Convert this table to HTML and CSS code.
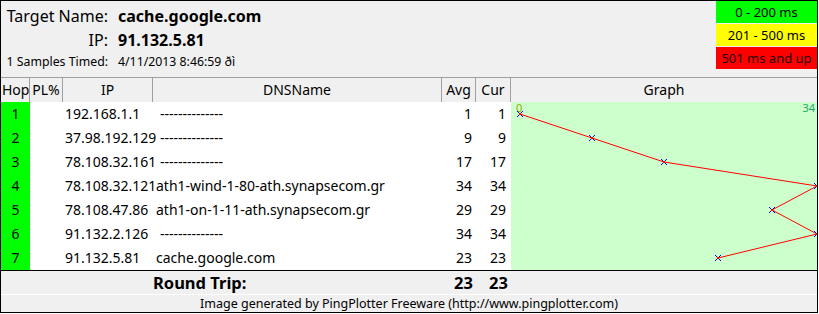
FILE: index.html
```html
<!DOCTYPE html>
<html>
<head>
<meta charset="utf-8">
<link rel="stylesheet" href="styles.css">
</head>
<body>
<div class="frame">
  <div class="top">
    <div class="info">
      <div class="lbl big">Target Name:</div><div class="val big b">cache.google.com</div>
      <div class="lbl big">IP:</div><div class="val big b">91.132.5.81</div>
      <div class="lbl small">1 Samples Timed:</div><div class="val small">4/11/2013 8:46:59 ðì</div>
    </div>
    <div class="legend">
      <div class="lg green">0 - 200 ms</div>
      <div class="lg yellow">201 - 500 ms</div>
      <div class="lg red">501 ms and up</div>
    </div>
  </div>
  <div class="hdr">
    <div class="h hop">Hop</div>
    <div class="h">PL%</div>
    <div class="h">IP</div>
    <div class="h">DNSName</div>
    <div class="h">Avg</div>
    <div class="h">Cur</div>
    <div class="h last">Graph</div>
  </div>
  <div class="body">
    <div class="c hopc">1</div><div class="c"></div><div class="c ip">192.168.1.1</div><div class="c dns dash">--------------</div><div class="c num">1</div><div class="c num cur">1</div>
    <div class="c hopc">2</div><div class="c"></div><div class="c ip">37.98.192.129</div><div class="c dns dash">--------------</div><div class="c num">9</div><div class="c num cur">9</div>
    <div class="c hopc">3</div><div class="c"></div><div class="c ip">78.108.32.161</div><div class="c dns dash">--------------</div><div class="c num">17</div><div class="c num cur">17</div>
    <div class="c hopc">4</div><div class="c"></div><div class="c ip">78.108.32.121</div><div class="c dns">ath1-wind-1-80-ath.synapsecom.gr</div><div class="c num">34</div><div class="c num cur">34</div>
    <div class="c hopc">5</div><div class="c"></div><div class="c ip">78.108.47.86</div><div class="c dns">ath1-on-1-11-ath.synapsecom.gr</div><div class="c num">29</div><div class="c num cur">29</div>
    <div class="c hopc">6</div><div class="c"></div><div class="c ip">91.132.2.126</div><div class="c dns dash">--------------</div><div class="c num">34</div><div class="c num cur">34</div>
    <div class="c hopc">7</div><div class="c"></div><div class="c ip">91.132.5.81</div><div class="c dns">cache.google.com</div><div class="c num">23</div><div class="c num cur">23</div>
    <div class="graph">
      <svg width="306" height="168" viewBox="0 0 306 168">
        <text x="5" y="10" class="g0">0</text>
        <text x="304" y="10" class="g34" text-anchor="end">34</text>
        <polyline points="9,12 81,36 153,60 306,84 261,108 306,132 207,156" fill="none" stroke="#ff0000" stroke-width="1"/>
        <g stroke="#0000ff" stroke-width="1" fill="none">
          <path d="M6 9l6 6M12 9l-6 6"/>
          <path d="M78 33l6 6M84 33l-6 6"/>
          <path d="M150 57l6 6M156 57l-6 6"/>
          <path d="M303 81l6 6M309 81l-6 6"/>
          <path d="M258 105l6 6M264 105l-6 6"/>
          <path d="M303 129l6 6M309 129l-6 6"/>
          <path d="M204 153l6 6M210 153l-6 6"/>
        </g>
        <g fill="#ff0000">
          <rect x="8" y="11" width="2" height="2"/>
          <rect x="80" y="35" width="2" height="2"/>
          <rect x="152" y="59" width="2" height="2"/>
          <rect x="305" y="83" width="2" height="2"/>
          <rect x="260" y="107" width="2" height="2"/>
          <rect x="305" y="131" width="2" height="2"/>
          <rect x="206" y="155" width="2" height="2"/>
        </g>
      </svg>
    </div>
  </div>
  <div class="rt">
    <div class="rtl">Round Trip:</div>
    <div class="rtn">23</div>
    <div class="rtn">23</div>
    <div></div>
  </div>
  <div class="foot">Image generated by PingPlotter Freeware (http://www.pingplotter.com)</div>
</div>
</body>
</html>
```
FILE: styles.css
```css
html, body { margin: 0; padding: 0; background: #ffffff; }
body { font-family: "Noto Sans", "Open Sans", sans-serif; color: #000; }
.frame {
  box-sizing: border-box;
  width: 818px;
  height: 313px;
  border: 1px solid #000;
  background: #f0f0f0;
  display: flex;
  flex-direction: column;
}
.top {
  height: 76px;
  display: flex;
  justify-content: space-between;
  align-items: flex-start;
}
.info {
  display: grid;
  grid-template-columns: 107px auto;
  grid-template-rows: 26px 22px 20px;
  column-gap: 10px;
  padding-top: 2px;
  align-items: center;
}
.lbl { text-align: right; white-space: nowrap; }
.val { white-space: nowrap; }
.big { font-size: 16px; }
.small { font-size: 12.3px; }
.b { font-weight: bold; }
.legend { display: flex; flex-direction: column; gap: 1px; width: 101px; }
.lg { height: 22px; line-height: 22px; text-align: center; font-size: 13px; }
.green { background: #00ff00; }
.yellow { background: #ffff00; }
.red { background: #ff0000; color: #1a0000; }
.hdr {
  display: grid;
  grid-template-columns: 29px 33px 90px 289px 34px 35px 306px;
  height: 24px;
  border-top: 1px solid #a0a0a0;
  font-size: 14px;
}
.h {
  border-right: 1px solid #a0a0a0;
  text-align: center;
  line-height: 24px;
  white-space: nowrap;
  overflow: hidden;
}
.h.hop { text-align: left; padding-left: 1px; }
.h.last { border-right: none; }
.body {
  display: grid;
  grid-template-columns: 29px 33px 90px 289px 34px 35px 306px;
  grid-template-rows: repeat(7, 24px);
  background: #ffffff;
  font-size: 14px;
  border-bottom: 1px solid #000;
}
.c { line-height: 24px; white-space: nowrap; }
.hopc { background: #00ff00; text-align: center; }
.ip { padding-left: 2px; overflow: visible; }
.dns { padding-left: 3px; }
.dns.dash { padding-left: 7px; }
.num { text-align: right; padding-right: 4px; }
.num.cur { padding-right: 5px; }
.graph {
  grid-column: 7;
  grid-row: 1 / span 7;
  background: #ccffcc;
  overflow: hidden;
}
.graph svg { display: block; }
.g0 { font-size: 11px; fill: #99aa00; font-family: "Noto Sans", sans-serif; }
.g34 { font-size: 11px; fill: #22aa66; font-family: "Noto Sans", sans-serif; }
.rt {
  display: grid;
  grid-template-columns: 152px 289px 34px 35px 306px;
  height: 23px;
  border-bottom: 1px solid #ffffff;
  font-size: 16.5px;
  font-weight: bold;
  line-height: 23px;
}
.rtn { text-align: right; padding-right: 3px; }
.rt .rtl { grid-column: 1 / span 2; padding-left: 152px; }
.foot {
  flex: 1;
  text-align: center;
  font-size: 12.5px;
  line-height: 17px;
}
```
